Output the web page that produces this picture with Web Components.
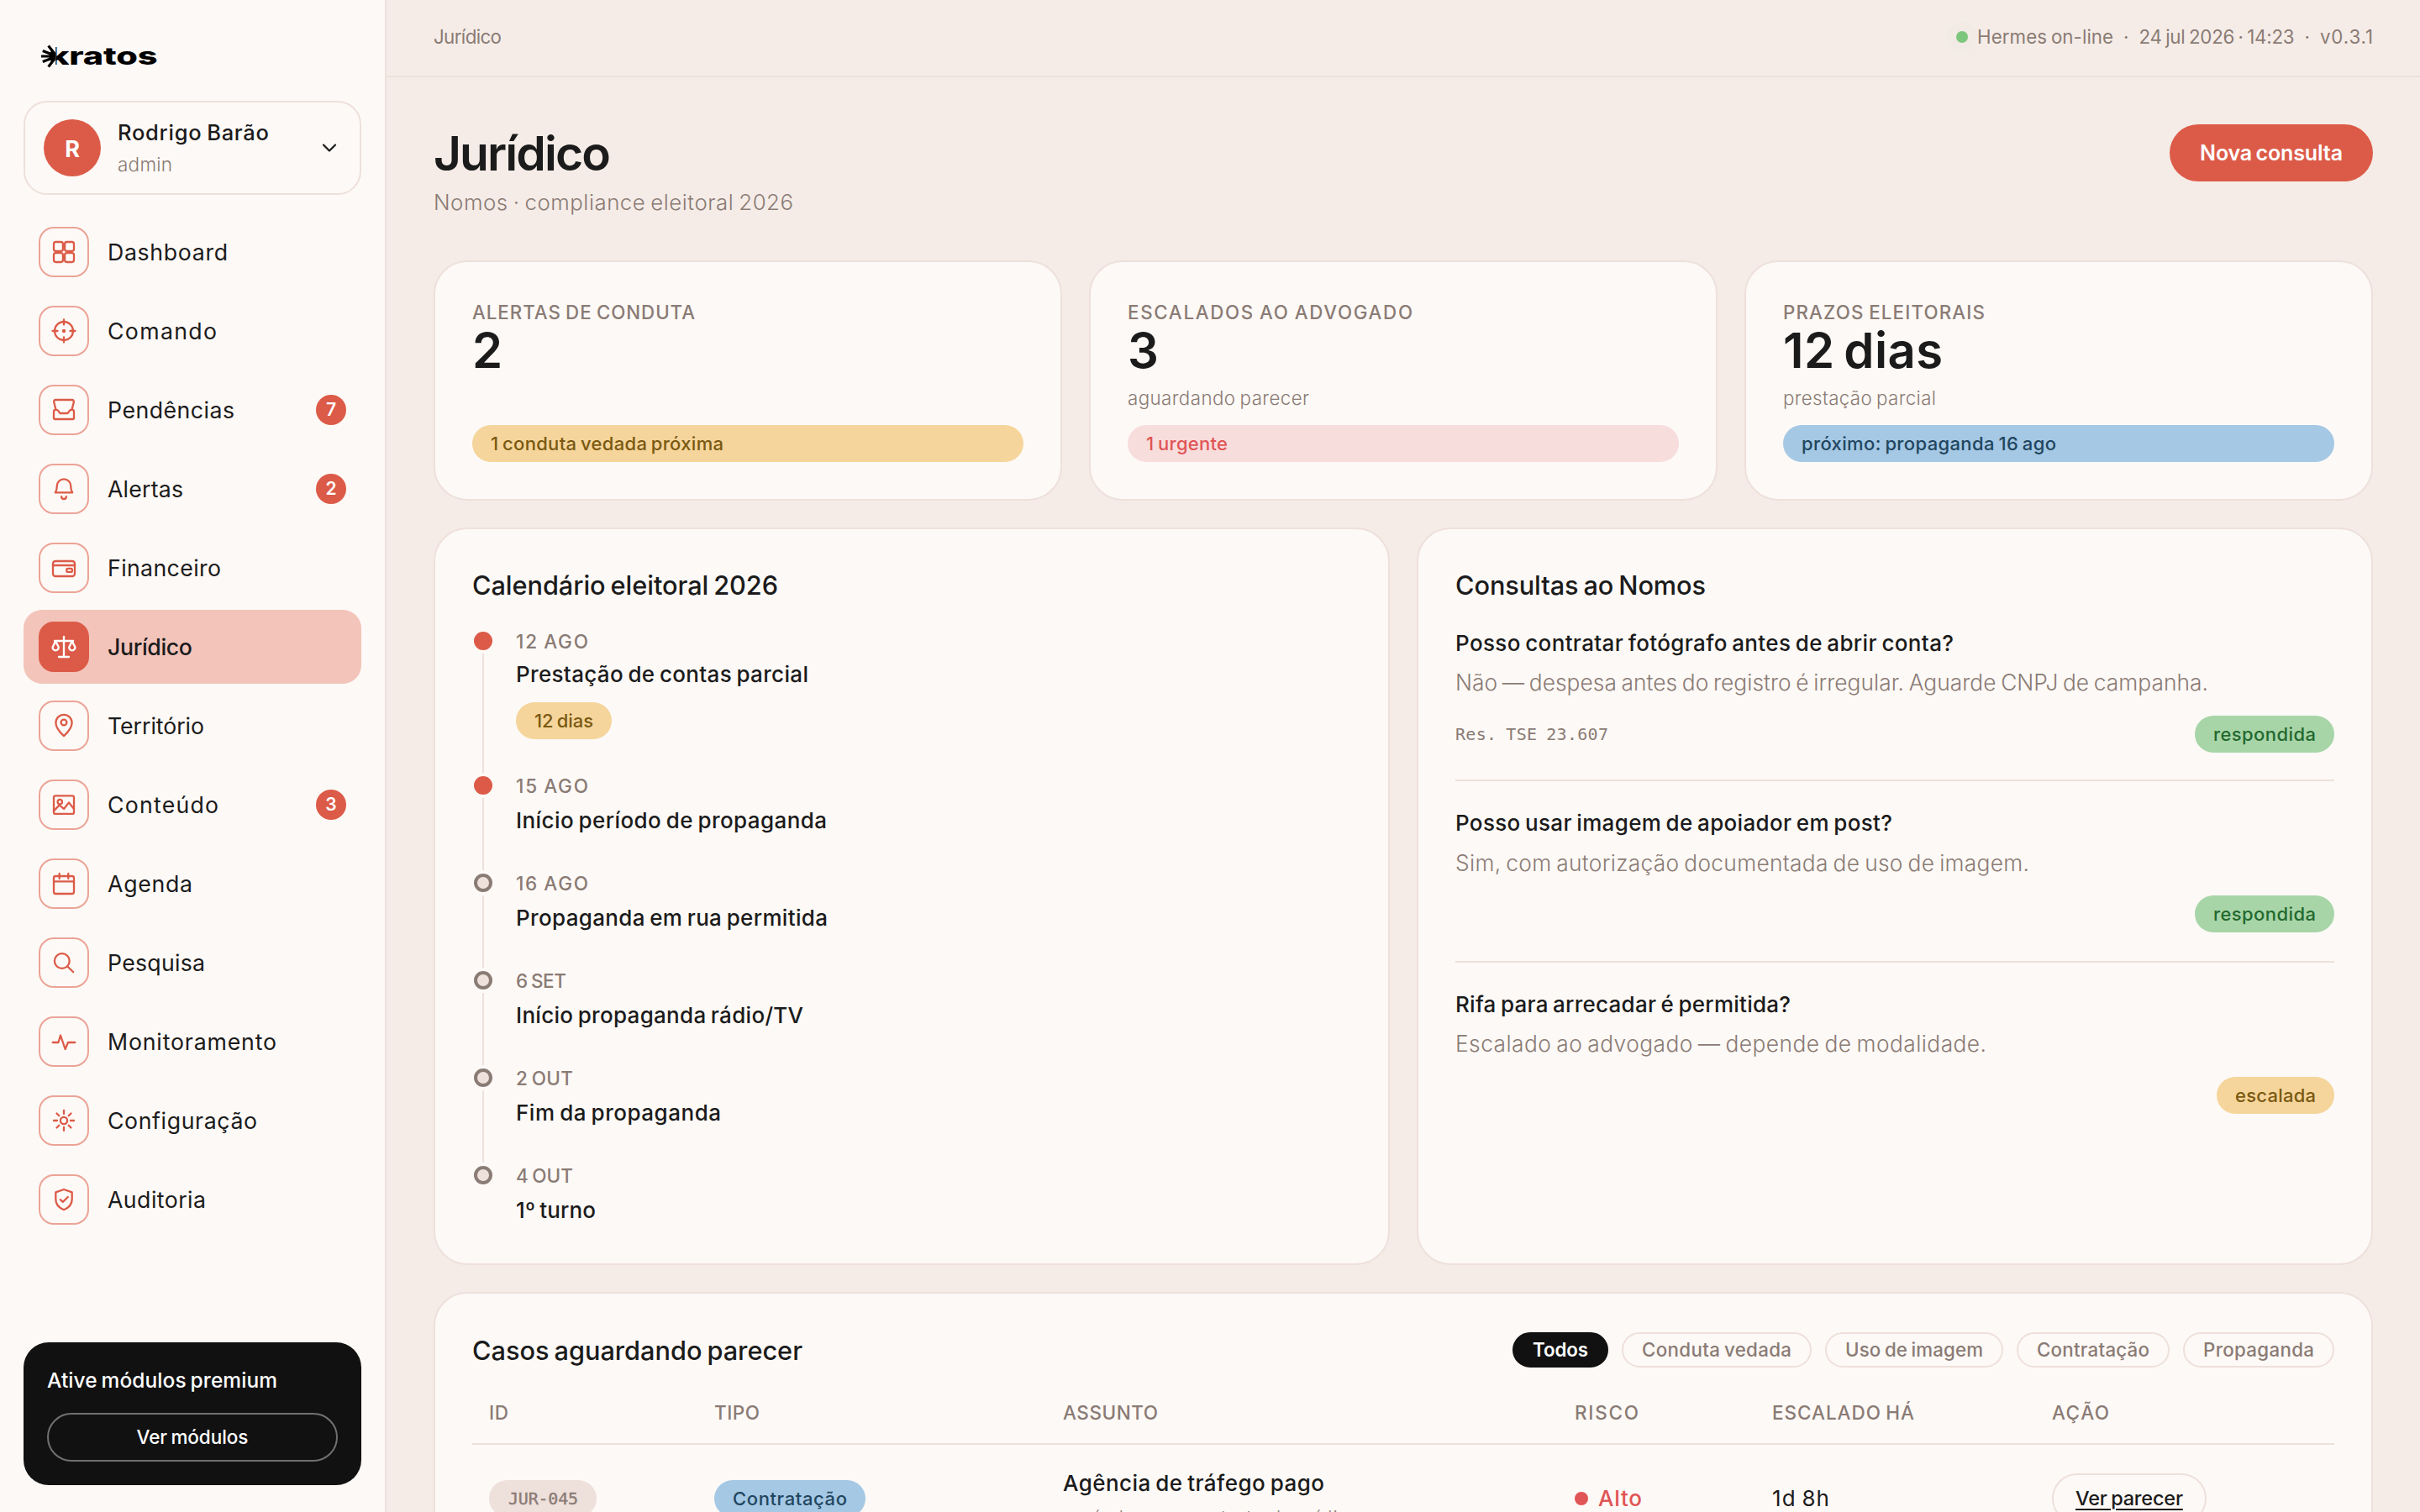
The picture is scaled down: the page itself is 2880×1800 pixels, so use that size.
<!DOCTYPE html>
<html lang="pt-BR">
<head>
<meta charset="utf-8">
<title>Kratos · Jurídico</title>
<style>
html,body{margin:0;padding:0}
body{
  --bg:#f5ece7;--surface:#fdf9f6;--line:#eee0db;--ink:#1b1b1b;--muted:#8a7b75;--accent:#dc5b48;
  width:2880px;height:1800px;overflow:hidden;background:var(--bg);color:var(--ink);
  font-family:Inter,"Liberation Sans",sans-serif;font-size:26px;line-height:36px;
}
</style>
</head>
<body>
<kr-app></kr-app>
<script>
const esc = s => s.replace(/&/g,'&amp;').replace(/</g,'&lt;');
const t = (text, w, cls='') => `<kr-text class="${cls}" w="${w}">${esc(text)}</kr-text>`;
function define(name, render){
  customElements.define(name, class extends HTMLElement{
    connectedCallback(){
      if(this.shadowRoot) return;
      this.attachShadow({mode:'open'}).innerHTML = render(this);
    }
  });
}

const ICONS = {
  dashboard:'<rect x="-12" y="-12" width="10.900" height="10.900" rx="2.400"/><rect x="1.100" y="-12" width="10.900" height="10.900" rx="2.400"/><rect x="-12" y="1.100" width="10.900" height="10.900" rx="2.400"/><rect x="1.100" y="1.100" width="10.900" height="10.900" rx="2.400"/>',
  target:'<circle r="11"/><path d="M0-13.500V-7.500M0 13.500V7.500M-13.500 0H-7.500M13.500 0H7.500"/><circle r="2.200" fill="currentColor" stroke="none"/>',
  inbox:'<path d="M-9.600-.600L-11.800-9.200Q-12.200-12-9.600-12H9.600Q12.200-12 11.800-9.200L9.600-.600"/><path d="M-12 2Q-12-.200-9.800-.200H-8.600Q-7.400-.200-6.800.800L-5.200 3.200Q-4.600 4-3.600 4H3.600Q4.600 4 5.200 3.200L6.800.800Q7.400-.200 8.600-.200H9.800Q12-.200 12 2V9.400Q12 11 10.400 11H-10.400Q-12 11-12 9.400Z"/>',
  bell:'<path d="M-10.200 4.400Q-8.200 1.500-8.200-3.400A8.200 8.200 0 0 1 8.200-3.400Q8.200 1.500 10.200 4.400Z"/><path d="M-2.800 9.200A2.800 2.800 0 0 0 2.800 9.200"/>',
  wallet:'<rect x="-13" y="-8" width="26" height="18" rx="3"/><path d="M-13-3H13"/><rect x="3.300" y="0.800" width="6.600" height="4" rx="1.400"/>',
  scales:'<path d="M0-12V12M-6 12H6M-11-7H11"/><path d="M-9.800-6.600L-13.200 0A3.500 3.500 0 1 0-6.400 0ZM9.800-6.600L13.200 0A3.500 3.500 0 1 1 6.400 0Z"/>',
  pin:'<path d="M0 12.200C-5 7.500-9.600 2.500-9.600-3.600A9.600 9.600 0 0 1 9.600-3.600C9.600 2.500 5 7.500 0 12.200Z"/><circle cy="-4" r="3.400"/>',
  image:'<rect x="-12" y="-10.700" width="24" height="21.600" rx="2"/><circle cx="-4.700" cy="-3.400" r="2.700"/><path d="M-12 7.400L-5.300.4 0 5 6-2.600 12 5"/>',
  calendar:'<rect x="-12" y="-9" width="24" height="21" rx="2.200"/><path d="M-12-2.600H12M-5.300-12V-6M5.300-12V-6"/>',
  search:'<circle cx="-2.200" cy="-2" r="8.900"/><path d="M4.600 4.700L11.200 11.300"/>',
  pulse:'<path d="M-13.300 1H-6.500L-4-7.500 1.600 9 5 1H13.300"/>',
  gear:'<circle r="4.100"/><path d="M0-12V-8M0 12V8M-12 0H-8M12 0H8M-8.500-8.500L-5.700-5.700M8.500 8.500L5.700 5.700M8.500-8.500L5.700-5.700M-8.500 8.500L-5.700 5.700"/>',
  shield:'<path d="M0-12L9.700-8.600V-.5C9.700 6 5.500 10 0 12.200-5.500 10-9.700 6-9.700-.5V-8.600Z"/><path d="M-4.200.2L-1.200 2.900 4.800-3"/>'
};

define('kr-icon', el => `
<style>:host{display:block;width:32px;height:32px}svg{display:block;overflow:visible}</style>
<svg width="32" height="32" viewBox="-16 -16 32 32" fill="none" stroke="currentColor" stroke-width="2.300" stroke-linecap="round" stroke-linejoin="round">${ICONS[el.getAttribute('name')]}</svg>`);

define('kr-pill', el => `
<style>
:host{display:flex;align-items:center;height:44px;box-sizing:border-box;padding:0 22px;border-radius:22px;font-size:22px;line-height:28px;font-weight:500;white-space:nowrap}
:host([tone=amber]){background:#f5d59b;color:#7a5912}
:host([tone=red]){background:#f8dddd;color:#e05555}
:host([tone=blue]){background:#a5c8e4;color:#21465f}
:host([tone=green]){background:#a8d5a8;color:#24692f}
:host([tone=code]){background:var(--line);color:var(--muted);padding:0 22px 0 23px;font:500 20px/28px "DejaVu Sans Mono","Liberation Mono",monospace;-webkit-text-stroke:.4px currentColor}
</style><slot></slot>`);

define('kr-logo', () => `
<style>
:host{display:flex;align-items:center;height:30px;color:#000}
svg{display:block;flex:none}
.word{display:flex;margin-left:-9px;font:800 28px/30px Inter,sans-serif;transform:scaleX(1.48);transform-origin:0 50%;letter-spacing:-.2px}
.k{clip-path:polygon(34% 0,100% 0,100% 100%,34% 100%)}
.r{letter-spacing:-.1px}
</style>
<svg width="18" height="28" viewBox="0 0 18 28" fill="none" stroke="currentColor" stroke-width="3.200"><path d="M16 11L8.600 1.600M16 13L1.800 7.400M16 14H0M16 15L1.800 20.600M16 17L8.600 26.400"/><path d="M12 7L17 10.500V17.500L12 21L9.500 14Z" fill="currentColor" stroke="none"/></svg>
<div class="word"><span class="k">k</span><span class="r">ratos</span></div>`);

define('kr-user-card', () => `
<style>
:host{display:flex;align-items:center;height:112px;box-sizing:border-box;border:2px solid var(--line);border-radius:28px;padding:0 26px 0 22px}
.avatar{width:68px;height:68px;border-radius:50%;background:var(--accent);color:#fff;display:flex;align-items:center;justify-content:center;font-weight:700;font-size:27px;padding-top:3px;box-sizing:border-box}
.who{flex:1;margin-left:20px;padding-top:2px}
.name{font-size:25.500px;line-height:36px;font-weight:500}
.role{margin-top:2px;font-size:22.500px;line-height:36px;font-weight:300;color:var(--muted)}
svg{display:block}
</style>
<div class="avatar">R</div>
<div class="who"><div class="name">${t('Rodrigo Barão',180)}</div><div class="role">${t('admin',65)}</div></div>
<svg width="20" height="12" viewBox="0 0 20 12" fill="none" stroke="#1b1b1b" stroke-width="2.200" stroke-linecap="round" stroke-linejoin="round"><path d="M3 2.500L10 9.500 17 2.500"/></svg>`);

define('kr-nav-item', el => {
  const badge = el.getAttribute('badge');
  return `
<style>
:host{display:flex;align-items:center;height:88px;box-sizing:border-box;padding:0 18px;border-radius:22px}
.box{width:60px;height:60px;box-sizing:border-box;border:2px solid #eba497;border-radius:18px;color:var(--accent);display:flex;align-items:center;justify-content:center}
.label{flex:1;margin-left:22px;font-size:26.700px;line-height:36px}
.badge{width:36px;height:36px;border-radius:50%;background:var(--accent);color:#fff;font-size:21px;font-weight:600;display:flex;align-items:center;justify-content:center}
:host([active]){background:#f3c4ba}
:host([active]) .box{background:var(--accent);border-color:var(--accent);color:#fff}
:host([active]) .label{font-weight:500}
</style>
<div class="box"><kr-icon name="${el.getAttribute('icon')}"></kr-icon></div>
<div class="label">${t(el.getAttribute('label'), el.getAttribute('lw'))}</div>
${badge ? `<div class="badge">${badge}</div>` : ''}`;
});

define('kr-promo', () => `
<style>
:host{display:flex;flex-direction:column;height:170px;box-sizing:border-box;border-radius:30px;background:#111;color:#fff;padding:27px 28px 28px}
.title{font-size:24.500px;font-weight:500;line-height:36px}
.btn{margin-top:auto;height:58px;box-sizing:border-box;border:2px solid #707070;border-radius:29px;display:flex;align-items:center;justify-content:center;font-size:22.500px;font-weight:500}
</style>
<div class="title">${t('Ative módulos premium',274)}</div>
<div class="btn">${t('Ver módulos',133)}</div>`);

const NAV = [
  ['dashboard','Dashboard',143],['target','Comando',130],['inbox','Pendências',151,'7'],['bell','Alertas',90,'2'],
  ['wallet','Financeiro',135],['scales','Jurídico',101],['pin','Território',115],['image','Conteúdo',132,'3'],
  ['calendar','Agenda',101],['search','Pesquisa',116],['pulse','Monitoramento',201],['gear','Configuração',178],['shield','Auditoria',117]
];
define('kr-sidebar', () => `
<style>
:host{display:flex;flex-direction:column;flex:none;width:460px;height:1800px;box-sizing:border-box;background:var(--surface);border-right:2px solid var(--line);padding:52px 28px 32px}
kr-logo{margin-left:21px}
kr-user-card{margin-top:38px}
nav{display:flex;flex-direction:column;gap:6px;margin-top:24px}
kr-promo{margin-top:auto}
</style>
<kr-logo></kr-logo>
<kr-user-card></kr-user-card>
<nav>${NAV.map(([i,l,w,b]) => `<kr-nav-item icon="${i}" label="${l}" lw="${w}"${b?` badge="${b}"`:''}${l==='Jurídico'?' active':''}></kr-nav-item>`).join('')}</nav>
<kr-promo></kr-promo>`);

define('kr-topbar', () => `
<style>
:host{display:flex;flex:none;align-items:center;justify-content:space-between;height:92px;box-sizing:border-box;border-bottom:2px solid var(--line);padding:0 56px 2px;font-size:22.300px;line-height:36px;color:var(--muted)}
.meta{display:flex;align-items:center;gap:12px}
.status{display:flex;align-items:center;gap:11px}
.dot{width:14px;height:14px;border-radius:50%;background:#7dc67d;box-shadow:0 0 0 11px #f2ebe5}
</style>
<div>${t('Jurídico',81)}</div>
<div class="meta"><div class="status"><i class="dot"></i>${t('Hermes on-line',162)}</div><span>·</span>${t('24 jul 2026 · 14:23',185)}<span>·</span>${t('v0.3.1',63)}</div>`);

define('kr-page-header', () => `
<style>
:host{display:flex;justify-content:space-between;align-items:flex-start}
h1{margin:0;font-size:57px;line-height:70px;font-weight:600}
p{margin:5px 0 0;font-size:25.800px;line-height:36px;font-weight:300;color:var(--muted)}
.btn{height:68px;border-radius:34px;background:var(--accent);color:#fff;padding:0 36px;display:flex;align-items:center;font-size:25px;font-weight:600}
</style>
<div><h1>${t('Jurídico',211)}</h1><p>${t('Nomos · compliance eleitoral 2026',428)}</p></div>
<div class="btn">${t('Nova consulta',170)}</div>`);

define('kr-stat', el => {
  const a = n => el.getAttribute(n);
  return `
<style>
:host{display:flex;flex-direction:column;flex:1;height:286px;box-sizing:border-box;background:var(--surface);border:2px solid var(--line);border-radius:40px;padding:46px 44px 44px}
.label{font-size:22.300px;line-height:28px;font-weight:500;color:var(--muted)}
.value{margin-top:1px;font-size:58px;line-height:60px;font-weight:600}
.sub{margin-top:9px;font-size:22.300px;line-height:36px;font-weight:300;color:var(--muted)}
kr-pill{margin-top:auto}
</style>
<div class="label">${t(a('label'),a('lw'))}</div>
<div class="value">${t(a('value'),a('vw'))}</div>
${a('sub')?`<div class="sub">${t(a('sub'),a('sw'))}</div>`:''}
<kr-pill tone="${a('tone')}">${t(a('pill'),a('pw'))}</kr-pill>`;
});

define('kr-panel', el => `
<style>
:host{display:block;box-sizing:border-box;background:var(--surface);border:2px solid var(--line);border-radius:40px;padding:47px 44px 44px}
h2{margin:0;font-size:30.700px;line-height:39px;font-weight:500}
</style>
${el.hasAttribute('heading')?`<h2>${t(el.getAttribute('heading'),el.getAttribute('hw'))}</h2>`:''}<slot></slot>`);

const EVENTS = [
  ['12 AGO',86,'Prestação de contas parcial',348,1,'12 dias'],
  ['15 AGO',86,'Início período de propaganda',370,1],
  ['16 AGO',86,'Propaganda em rua permitida',371,0],
  ['6 SET',60,'Início propaganda rádio/TV',342,0],
  ['2 OUT',68,'Fim da propaganda',244,0],
  ['4 OUT',68,'1º turno',95,0]
];
define('kr-timeline', () => `
<style>
:host{display:block;margin-top:32px;padding-left:2px}
.row{display:flex;height:116px}
.row.tall{height:172px}
.rail{width:22px;display:flex;flex-direction:column;align-items:center;gap:4px;padding-top:4px}
.dot{width:22px;height:22px;box-sizing:border-box;border-radius:50%;border:4px solid var(--muted);background:var(--line)}
.dot.on{background:var(--accent);border-color:var(--accent)}
.line{width:2px;flex:1;background:var(--line)}
.body{margin-left:28px;padding-top:2px;display:flex;flex-direction:column;align-items:flex-start}
.date{font-size:22.500px;line-height:28px;font-weight:500;color:var(--muted)}
.title{margin-top:9px;font-size:26px;line-height:36px;font-weight:500}
.tall .title{margin-top:7px}
kr-pill{margin-top:15px}
</style>
${EVENTS.map(([d,dw,n,nw,on,pill],i) => `<div class="row${pill?' tall':''}"><div class="rail"><i class="dot${on?' on':''}"></i>${i<5?'<i class="line"></i>':''}</div><div class="body"><div class="date">${t(d,dw)}</div><div class="title">${t(n,nw)}</div>${pill?`<kr-pill tone="amber">${t(pill,70)}</kr-pill>`:''}</div></div>`).join('')}`);

define('kr-query', el => {
  const a = n => el.getAttribute(n);
  return `
<style>
:host{display:flex;flex-direction:column;height:216px;box-sizing:border-box;border-bottom:2px solid var(--line);padding-top:32px}
:host([first]){height:214px}
:host([last]){border:0}
.q{font-size:26px;line-height:36px;font-weight:500}
.a{margin-top:12px;font-size:26.300px;line-height:36px;font-weight:300;color:var(--muted)}
:host([first]) .a,:host([last]) .a{margin-top:11px}
.foot{margin-top:20px;display:flex;align-items:center;justify-content:space-between}
:host([first]) .foot,:host([last]) .foot{margin-top:21px}
.ref{font:20px/28px "DejaVu Sans Mono","Liberation Mono",monospace;color:var(--muted)}
</style>
<div class="q">${t(a('q'),a('qw'))}</div>
<div class="a">${t(a('a'),a('aw'))}</div>
<div class="foot"><span class="ref">${a('ref')?t(a('ref'),182):''}</span><kr-pill tone="${a('tone')}">${t(a('state'),a('stw'))}</kr-pill></div>`;
});

define('kr-chip', el => `
<style>
:host{display:flex;align-items:center;justify-content:center;height:42px;box-sizing:border-box;border:2px solid var(--line);border-radius:21px;padding:0 22px;font-size:22.300px;line-height:28px;font-weight:500;color:var(--muted)}
:host([active]){background:#111;border-color:#111;color:#fff;font-weight:600}
</style>${t(el.getAttribute('label'),el.getAttribute('w'))}`);

define('kr-cases', () => `
<style>
:host{display:block}
header{display:flex;align-items:center;justify-content:space-between;height:42px;margin-top:-1px}
h2{margin:0;font-size:30.700px;line-height:39px;font-weight:500}
.chips{display:flex;gap:16px}
.head,.row{display:grid;grid-template-columns:268px 415px 609px 235px 333px 1fr;padding-left:20px}
.head{padding-top:40px;padding-bottom:22px;border-bottom:2px solid var(--line);font-size:22.500px;line-height:28px;font-weight:500;color:var(--muted)}
.row{height:128px;align-items:center}
.cell{display:flex;align-items:center}
.subject{display:block}
.subject .title{font-weight:500;line-height:36px;font-size:26px}
.subject .sub{margin-top:9px;font-size:22.300px;line-height:28px;font-weight:300;color:var(--muted)}
.risk{color:#e05555;font-weight:500;gap:12px}
.risk i{width:16px;height:16px;border-radius:50%;background:#e05555}
.btn{height:60px;box-sizing:border-box;border:2px solid var(--line);border-radius:30px;padding:0 26px;display:flex;align-items:center;font-size:23.500px;font-weight:500;text-decoration:underline;text-underline-offset:4px;text-decoration-thickness:2px}
</style>
<header><h2>${t('Casos aguardando parecer',393)}</h2><div class="chips">
<kr-chip label="Todos" w="66" active></kr-chip><kr-chip label="Conduta vedada" w="178"></kr-chip><kr-chip label="Uso de imagem" w="164"></kr-chip><kr-chip label="Contratação" w="134"></kr-chip><kr-chip label="Propaganda" w="132"></kr-chip></div></header>
<div class="head"><div>${t('ID',23)}</div><div>${t('TIPO',54)}</div><div>${t('ASSUNTO',113)}</div><div>${t('RISCO',76)}</div><div>${t('ESCALADO HÁ',169)}</div><div>${t('AÇÃO',68)}</div></div>
<div class="row">
<div class="cell"><kr-pill tone="code">${t('JUR-045',83)}</kr-pill></div>
<div class="cell"><kr-pill tone="blue">${t('Contratação',136)}</kr-pill></div>
<div class="cell subject"><div class="title">${t('Agência de tráfego pago',311)}</div><div class="sub">${t('período sem contrato de mídia',340)}</div></div>
<div class="cell risk"><i></i>${t('Alto',52)}</div>
<div class="cell">${t('1d 8h',68)}</div>
<div class="cell"><div class="btn">${t('Ver parecer',128)}</div></div>
</div>`);

define('kr-app', () => `
<style>
:host{display:flex;width:2880px;height:1800px;overflow:hidden}
main{flex:1;min-width:0;display:flex;flex-direction:column;height:1800px;overflow:hidden}
.content{flex:none;padding:56px 56px 0;display:flex;flex-direction:column;gap:32px}
kr-page-header{height:130px}
.stats,.cols{display:flex;gap:32px}
.cols kr-panel{flex:1;height:878px}
.cases{height:420px}
</style>
<kr-sidebar></kr-sidebar>
<main>
<kr-topbar></kr-topbar>
<div class="content">
<kr-page-header></kr-page-header>
<div class="stats">
<kr-stat label="ALERTAS DE CONDUTA" lw="265" value="2" vw="32" pill="1 conduta vedada próxima" pw="277" tone="amber"></kr-stat>
<kr-stat label="ESCALADOS AO ADVOGADO" lw="339" value="3" vw="32" sub="aguardando parecer" sw="216" pill="1 urgente" pw="97" tone="red"></kr-stat>
<kr-stat label="PRAZOS ELEITORAIS" lw="240" value="12 dias" vw="190" sub="prestação parcial" sw="182" pill="próximo: propaganda 16 ago" pw="303" tone="blue"></kr-stat>
</div>
<div class="cols">
<kr-panel heading="Calendário eleitoral 2026" hw="364"><kr-timeline></kr-timeline></kr-panel>
<kr-panel heading="Consultas ao Nomos" hw="298">
<kr-query first q="Posso contratar fotógrafo antes de abrir conta?" qw="593" a="Não — despesa antes do registro é irregular. Aguarde CNPJ de campanha." aw="896" ref="Res. TSE 23.607" tone="green" state="respondida" stw="122"></kr-query>
<kr-query q="Posso usar imagem de apoiador em post?" qw="520" a="Sim, com autorização documentada de uso de imagem." aw="683" tone="green" state="respondida" stw="122"></kr-query>
<kr-query last q="Rifa para arrecadar é permitida?" qw="399" a="Escalado ao advogado — depende de modalidade." aw="632" tone="amber" state="escalada" stw="96"></kr-query>
</kr-panel>
</div>
<kr-panel class="cases"><kr-cases></kr-cases></kr-panel>
</div>
</main>`);

/* Text run with tight word spaces; its tracking is adjusted so that it spans the given width. */
customElements.define('kr-text', class extends HTMLElement{
  connectedCallback(){
    if(this.shadowRoot) return;
    this.attachShadow({mode:'open'}).innerHTML =
      '<style>:host{display:inline-block;white-space:nowrap;text-decoration:inherit}span{display:inline-block;text-decoration:inherit;word-spacing:-.07em}</style><span><slot></slot></span>';
    const span = this.shadowRoot.querySelector('span');
    const width = parseFloat(this.getAttribute('w'));
    const count = this.textContent.length;
    if(count < 2) return;
    const spacing = (width - span.getBoundingClientRect().width) / (count - 1);
    span.style.letterSpacing = spacing.toFixed(3) + 'px';
    span.style.marginRight = (-spacing).toFixed(3) + 'px';
  }
});
</script>
</body>
</html>
